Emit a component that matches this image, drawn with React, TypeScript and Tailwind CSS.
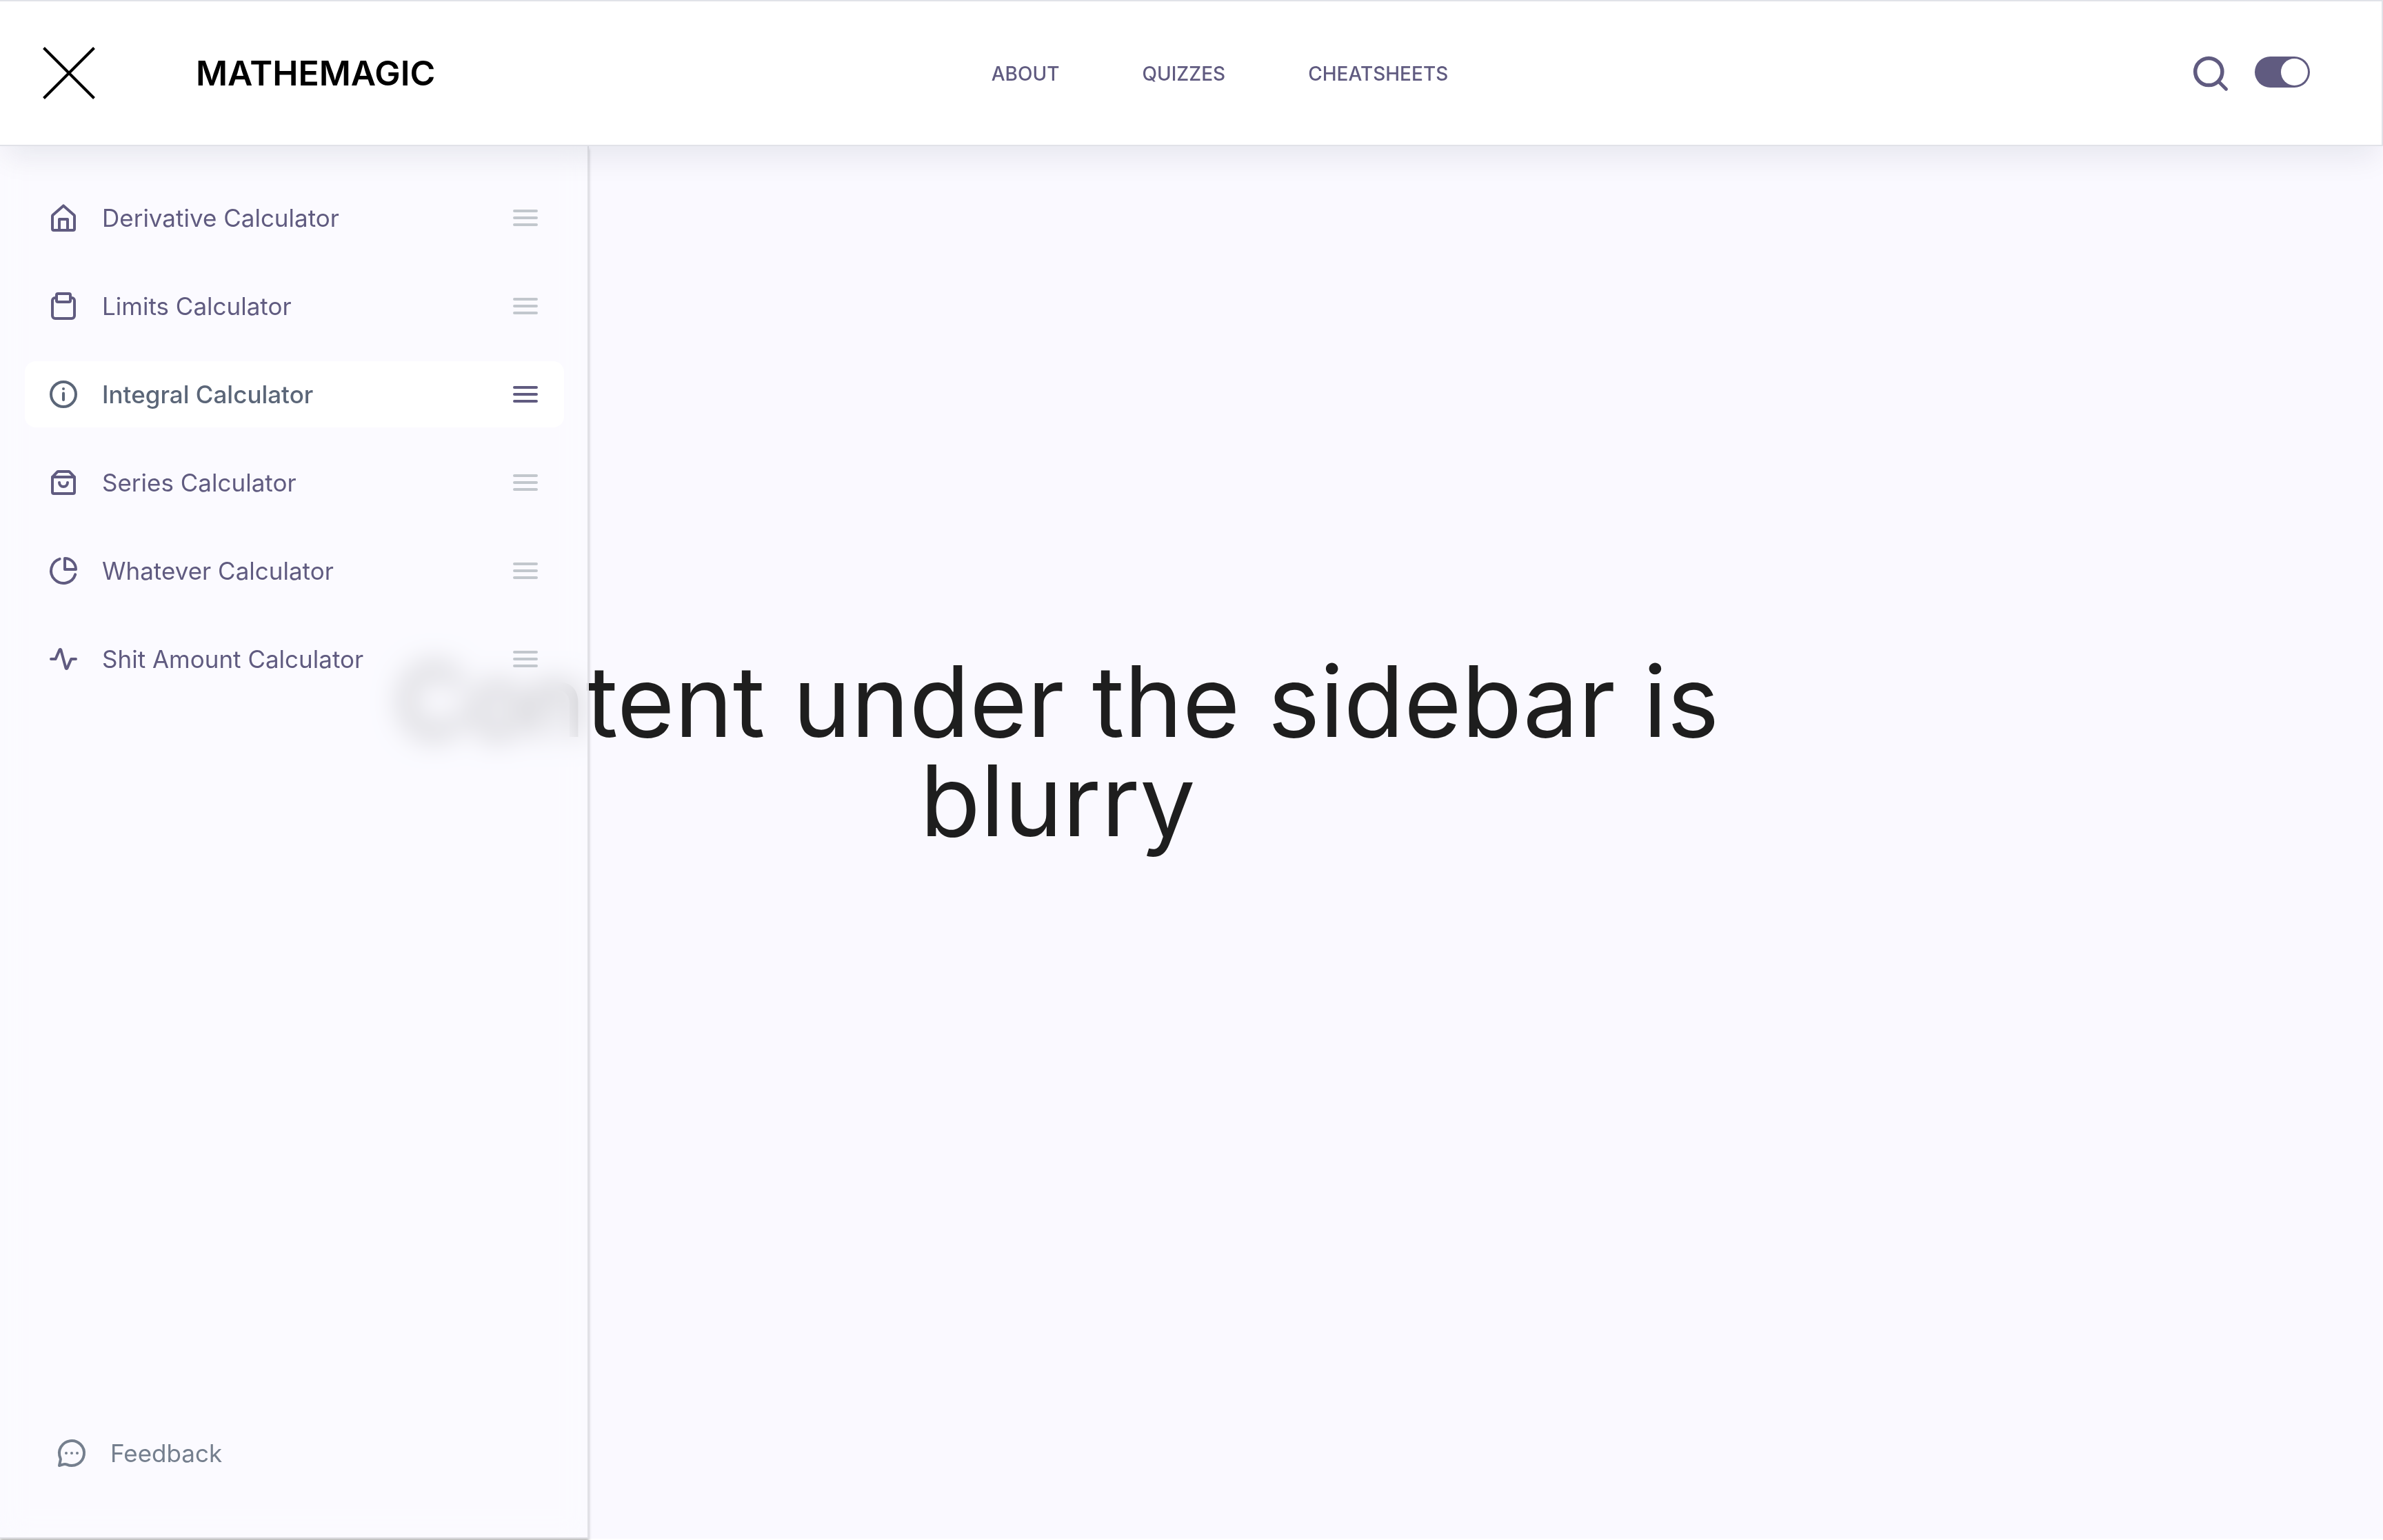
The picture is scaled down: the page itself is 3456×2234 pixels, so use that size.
import type { ReactNode } from "react";

type IconProps = { className?: string; children: ReactNode };

function Icon({ className = "", children }: IconProps) {
  return (
    <svg
      viewBox="0 0 24 24"
      fill="none"
      stroke="currentColor"
      strokeWidth={2}
      strokeLinecap="round"
      strokeLinejoin="round"
      aria-hidden="true"
      className={"size-12 shrink-0 " + className}
    >
      {children}
    </svg>
  );
}

const HomeIcon = () => (
  <Icon>
    <path d="M4 10.7V20a1 1 0 0 0 1 1h14a1 1 0 0 0 1-1v-9.3a1 1 0 0 0-.3-.7L12 3.2 4.3 10a1 1 0 0 0-.3.7Z" />
    <path d="M9 21v-8h6v8" />
  </Icon>
);

const ClipboardIcon = () => (
  <Icon>
    <path d="M7 6H6a2 2 0 0 0-2 2v11a2 2 0 0 0 2 2h12a2 2 0 0 0 2-2V8a2 2 0 0 0-2-2h-1" />
    <rect x="7" y="3" width="10" height="6" rx="1" />
  </Icon>
);

const InfoIcon = () => (
  <Icon>
    <circle cx="12" cy="12" r="9" />
    <path d="M12 11.3V16" />
    <circle cx="12" cy="8" r="1" fill="currentColor" stroke="none" />
  </Icon>
);

const BagIcon = () => (
  <Icon>
    <path d="M4 8.4V19a1 1 0 0 0 1 1h14a1 1 0 0 0 1-1V8.4a1 1 0 0 0-.3-.7l-3.1-3.3a1.2 1.2 0 0 0-.9-.4H8.3a1.2 1.2 0 0 0-.9.4L4.3 7.7a1 1 0 0 0-.3.7Z" />
    <path d="M4 8h16" />
    <path d="M9 12a3 3 0 0 0 6 0" />
  </Icon>
);

const PieIcon = () => (
  <Icon>
    <path d="M9.3 3.4A9 9 0 1 0 20.6 14.7" />
    <path d="M13 3a8 8 0 0 1 8 8h-8Z" />
  </Icon>
);

const PulseIcon = () => (
  <Icon>
    <path d="M3 12h3.3L9.2 5.3a.5.5 0 0 1 .95.1l3.6 13.2a.5.5 0 0 0 .95.1L17.6 12H21" />
  </Icon>
);

const MessageIcon = () => (
  <Icon>
    <path d="M3.8 15.7A9 9 0 1 1 8.3 20.2C7.6 19.9 7 19.9 6.3 20.1L3 21l.7-3.3c.3-.7.4-1.3.1-2Z" />
    <g fill="currentColor" stroke="none">
      <circle cx="8" cy="12" r="1" />
      <circle cx="12" cy="12" r="1" />
      <circle cx="16" cy="12" r="1" />
    </g>
  </Icon>
);

const HandleIcon = ({ active }: { active: boolean }) => (
  <Icon className={active ? "text-[#605b80]" : "text-[#c2c7cd]"}>
    <path d="M4 7h16M4 12h16M4 17h16" />
  </Icon>
);

const calculators = [
  { label: "Derivative Calculator", icon: <HomeIcon /> },
  { label: "Limits Calculator", icon: <ClipboardIcon /> },
  { label: "Integral Calculator", icon: <InfoIcon />, active: true },
  { label: "Series Calculator", icon: <BagIcon /> },
  { label: "Whatever Calculator", icon: <PieIcon /> },
  { label: "Shit Amount Calculator", icon: <PulseIcon /> },
];

const links = ["ABOUT", "QUIZZES", "CHEATSHEETS"];

function Header() {
  return (
    <header className="relative z-10 flex h-[212px] items-center border-y-2 border-r-2 border-[#e1e2e8] bg-white pr-[104px] pl-[60px] shadow-[0_24px_40px_-8px_rgba(16,24,50,0.08)]">
      <button type="button" aria-label="Close menu" className="mr-12 text-black">
        <svg viewBox="0 0 80 80" fill="none" stroke="currentColor" strokeWidth={4} aria-hidden="true" className="size-20">
          <path d="M3.5 3.5l73 73M76.500 3.500l-73 73" />
        </svg>
      </button>
      <div className="flex flex-1">
        <span className="ml-24 text-[50px] font-semibold text-black">MATHEMAGIC</span>
      </div>
      <nav aria-label="Main" className="flex gap-[120px] pt-[2px] text-[28px] font-medium text-[#605b80]">
        {links.map((link) => (
          <a key={link} href="#">
            {link}
          </a>
        ))}
      </nav>
      <div className="flex flex-1 items-center justify-end gap-[34px]">
        <button type="button" aria-label="Search" className="text-[#605b80]">
          <svg viewBox="0 0 60 60" fill="none" stroke="currentColor" strokeLinecap="round" aria-hidden="true" className="size-[60px]">
            <circle cx="27.3" cy="28" r="19.6" strokeWidth={5.5} />
            <path d="M41.500 42.200l11 11" strokeWidth={5} />
          </svg>
        </button>
        <input
          type="checkbox"
          role="switch"
          aria-label="Dark mode"
          defaultChecked
          className="mb-1 flex h-[45px] w-20 appearance-none rounded-full bg-[#605b80] p-[3px] before:size-[39px] before:rounded-full before:bg-white checked:justify-end"
        />
      </div>
    </header>
  );
}

function Sidebar() {
  return (
    <aside className="col-start-1 row-start-1 flex w-[854px] flex-col justify-between border-r-2 border-b-2 border-[#e1e1e6] bg-[#fbfbff]/70 pt-[56px] pr-[34px] pb-[74px] pl-9 shadow-[0_4px_4px_rgba(0,0,0,0.25)] backdrop-blur-[20px]">
      <ul className="flex flex-col gap-8">
        {calculators.map(({ label, icon, active = false }) => (
          <li key={label}>
            <a
              href="#"
              aria-current={active ? "page" : undefined}
              className={
                active
                  ? "flex h-24 items-center gap-8 rounded-2xl bg-white px-8 text-[35px] font-medium text-[#5b6678]"
                  : "flex h-24 items-center gap-8 rounded-2xl px-8 text-[35px] text-[#605b80]"
              }
            >
              {icon}
              <span className="flex-1">{label}</span>
              <HandleIcon active={active} />
            </a>
          </li>
        ))}
      </ul>
      <a href="#" className="flex h-24 items-center gap-8 px-11 text-[35px] text-[#757f8e]">
        <MessageIcon />
        <span>Feedback</span>
      </a>
    </aside>
  );
}

export default function App() {
  return (
    <div className="flex min-h-screen flex-col overflow-hidden bg-white pb-[2px] font-['Inter',sans-serif]">
      <Header />
      <div className="grid flex-1 bg-[#faf9ff]">
        <main className="col-start-1 row-start-1 pt-[733px] pr-[388px]">
          <h1 className="mx-auto max-w-[2000px] text-center text-[143px] leading-[144px] text-[#1e1e1e]">
            Content under the sidebar is blurry
          </h1>
        </main>
        <Sidebar />
      </div>
    </div>
  );
}
